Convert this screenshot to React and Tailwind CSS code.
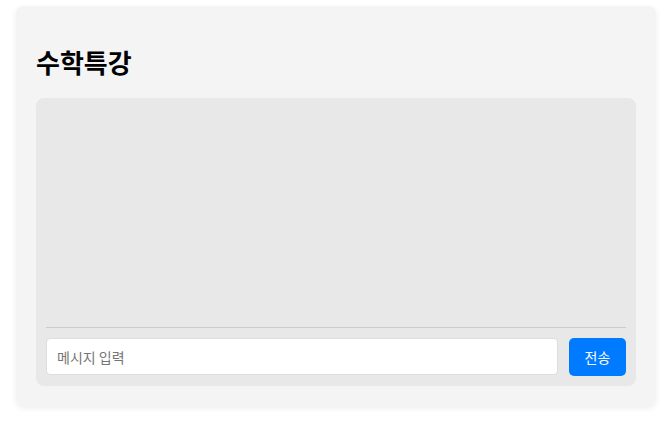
import React, { useState } from 'react';

const App = () => {
  const [message, setMessage] = useState('');

  return (
    <div className="min-h-[430px] bg-white pt-[6px] pl-4" style={{ fontFamily: '"Noto Sans CJK KR", "Noto Sans", sans-serif' }}>
      <div className="w-[640px] rounded-lg bg-[#f4f4f4] px-5 pb-5 pt-[40px] shadow-[0_2px_6px_rgba(0,0,0,0.08)]">
        <h2 className="text-[26px] font-bold leading-[32px] text-black">수학특강</h2>

        {/* 채팅 영역 */}
        <div className="mt-5 flex h-[288px] flex-col rounded-lg bg-[#e8e8e8] p-[10px]">
          <div className="flex-1" />
          <div className="flex gap-[11px] border-t border-[#cccccc] pt-[10px]">
            <input
              type="text"
              value={message}
              onChange={(e) => setMessage(e.target.value)}
              placeholder="메시지 입력"
              className="h-[37px] flex-1 rounded-[4px] border border-[#dddddd] bg-white px-[10px] text-[14px] text-black outline-none placeholder:text-[#757575]"
            />
            <button className="h-[38px] w-[57px] rounded-[5px] bg-[#007bff] text-[14px] text-white">
              전송
            </button>
          </div>
        </div>
      </div>
    </div>
  );
};

export default App;
